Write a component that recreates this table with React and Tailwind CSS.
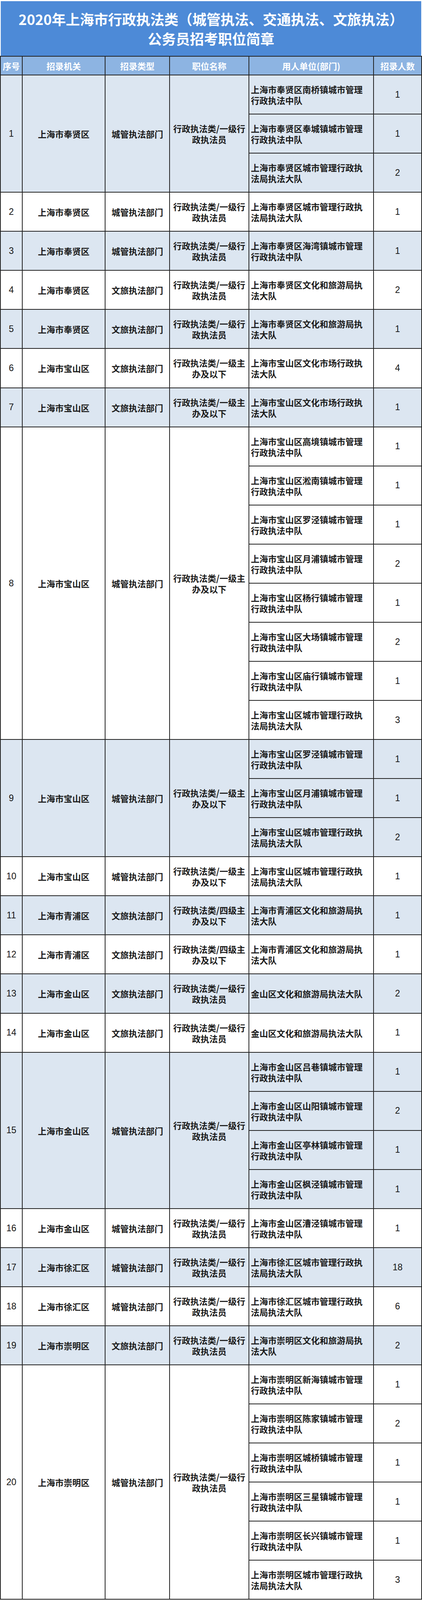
import React from "react";

const A = "行政执法类/一级行\n政执法员";
const B = "行政执法类/一级主\n办及以下";
const C = "行政执法类/四级主\n办及以下";

const town = (d, t) => `上海市${d}区${t}镇城市管理\n行政执法中队`;
const bureau = (d) => `上海市${d}区城市管理行政执\n法局执法大队`;
const culture = (d) => `上海市${d}区文化和旅游局执\n法大队`;

const groups = [
	{ org: "上海市奉贤区", type: "城管执法部门", pos: A, units: [[town("奉贤", "南桥"), 1], [town("奉贤", "奉城"), 1], [bureau("奉贤"), 2]] },
	{ org: "上海市奉贤区", type: "城管执法部门", pos: A, units: [[bureau("奉贤"), 1]] },
	{ org: "上海市奉贤区", type: "城管执法部门", pos: A, units: [[town("奉贤", "海湾"), 1]] },
	{ org: "上海市奉贤区", type: "文旅执法部门", pos: A, units: [[culture("奉贤"), 2]] },
	{ org: "上海市奉贤区", type: "文旅执法部门", pos: A, units: [[culture("奉贤"), 1]] },
	{ org: "上海市宝山区", type: "文旅执法部门", pos: B, units: [["上海市宝山区文化市场行政执\n法大队", 4]] },
	{ org: "上海市宝山区", type: "文旅执法部门", pos: B, units: [["上海市宝山区文化市场行政执\n法大队", 1]] },
	{
		org: "上海市宝山区", type: "城管执法部门", pos: B,
		units: [
			[town("宝山", "高境"), 1], [town("宝山", "淞南"), 1], [town("宝山", "罗泾"), 1], [town("宝山", "月浦"), 2],
			[town("宝山", "杨行"), 1], [town("宝山", "大场"), 2], [town("宝山", "庙行"), 1], [bureau("宝山"), 3],
		],
	},
	{ org: "上海市宝山区", type: "城管执法部门", pos: B, units: [[town("宝山", "罗泾"), 1], [town("宝山", "月浦"), 1], [bureau("宝山"), 2]] },
	{ org: "上海市宝山区", type: "城管执法部门", pos: B, units: [[bureau("宝山"), 1]] },
	{ org: "上海市青浦区", type: "文旅执法部门", pos: C, units: [[culture("青浦"), 1]] },
	{ org: "上海市青浦区", type: "文旅执法部门", pos: C, units: [[culture("青浦"), 1]] },
	{ org: "上海市金山区", type: "文旅执法部门", pos: A, units: [["金山区文化和旅游局执法大队", 2]] },
	{ org: "上海市金山区", type: "文旅执法部门", pos: A, units: [["金山区文化和旅游局执法大队", 1]] },
	{ org: "上海市金山区", type: "城管执法部门", pos: A, units: [[town("金山", "吕巷"), 1], [town("金山", "山阳"), 2], [town("金山", "亭林"), 1], [town("金山", "枫泾"), 1]] },
	{ org: "上海市金山区", type: "城管执法部门", pos: A, units: [[town("金山", "漕泾"), 1]] },
	{ org: "上海市徐汇区", type: "城管执法部门", pos: A, units: [[bureau("徐汇"), 18]] },
	{ org: "上海市徐汇区", type: "城管执法部门", pos: A, units: [[bureau("徐汇"), 6]] },
	{ org: "上海市崇明区", type: "文旅执法部门", pos: A, units: [[culture("崇明"), 2]] },
	{
		org: "上海市崇明区", type: "城管执法部门", pos: A,
		units: [
			[town("崇明", "新海"), 1], [town("崇明", "陈家"), 2], [town("崇明", "城桥"), 1],
			[town("崇明", "三星"), 1], [town("崇明", "长兴"), 1], [bureau("崇明"), 3],
		],
	},
];

const line = "border-[#222222]";
const cjk = "text-[22px] leading-[28px] font-semibold text-[#1a1a1a] whitespace-pre-line";
const num = "text-[23px] font-['Liberation_Sans',Arial,sans-serif] text-[#161616]";

function Group({ g, index }) {
	const bg = index % 2 === 0 ? "bg-[#dce6f1]" : "bg-white";
	return (
		<div className={`flex ${bg}`}>
			<div className={`w-[56px] shrink-0 flex items-center justify-center border-r-2 border-b-2 ${line} ${num}`}>
				{index + 1}
			</div>
			<div className={`w-[212px] shrink-0 flex items-center justify-center border-r-2 border-b-2 ${line} ${cjk}`}>
				{g.org}
			</div>
			<div className={`w-[165px] shrink-0 flex items-center justify-center border-r-2 border-b-2 ${line} ${cjk}`}>
				{g.type}
			</div>
			<div className={`w-[203px] shrink-0 flex items-center justify-center text-center border-r-2 border-b-2 ${line} ${cjk}`}>
				{g.pos}
			</div>
			<div className="flex-1 flex flex-col">
				{g.units.map(([unit, count], i) => (
					<div key={i} className="h-[100.07px] flex">
						<div className={`w-[319px] shrink-0 flex items-center pl-[4px] border-r-2 border-b-2 ${line} ${cjk}`}>
							{unit}
						</div>
						<div className={`flex-1 flex items-center justify-center border-b-2 ${line} ${num}`}>{count}</div>
					</div>
				))}
			</div>
		</div>
	);
}

export default function App() {
	const heads = [
		["序号", "w-[56px]"],
		["招录机关", "w-[212px]"],
		["招录类型", "w-[165px]"],
		["职位名称", "w-[203px]"],
		["用人单位(部门)", "w-[319px]"],
	];
	return (
		<div className="w-[1080px] bg-white font-['Noto_Sans_CJK_SC','Noto_Sans',sans-serif]">
			{/* Title */}
			<div className="mx-[2px] mt-[3px] h-[140px] bg-[#4d8ad7] flex flex-col items-center justify-center">
				<h1 className="text-[36px] leading-[50px] font-bold text-white">
					2020年上海市行政执法类（城管执法、交通执法、文旅执法）
				</h1>
				<h2 className="text-[36px] leading-[50px] font-bold text-white">公务员招考职位简章</h2>
			</div>

			<div className={`border-x-2 ${line}`}>
				{/* Header row */}
				<div className={`h-[50px] flex bg-[#8db4e2] border-y-2 ${line} text-white text-[22px] font-bold`}>
					{heads.map(([label, w]) => (
						<div key={label} className={`${w} shrink-0 flex items-center justify-center border-r-2 ${line}`}>
							{label}
						</div>
					))}
					<div className="flex-1 flex items-center justify-center">招录人数</div>
				</div>

				{groups.map((g, i) => (
					<Group key={i} g={g} index={i} />
				))}
			</div>
		</div>
	);
}
